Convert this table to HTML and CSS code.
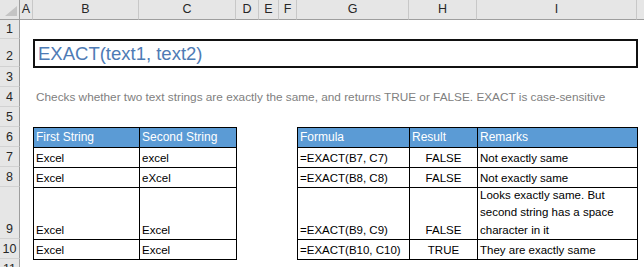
FILE: index.html
```html
<!DOCTYPE html>
<html>
    <head>
        <title>EXACT function</title>
        <link rel="stylesheet" href="styles.css">
    </head>
    <body>
        <div class="sheet">
            <div class="corner"><span class="corner-mark"></span></div>
            <div class="col-head">A</div>
            <div class="col-head">B</div>
            <div class="col-head">C</div>
            <div class="col-head">D</div>
            <div class="col-head">E</div>
            <div class="col-head">F</div>
            <div class="col-head">G</div>
            <div class="col-head">H</div>
            <div class="col-head">I</div>
            <div class="col-head last"></div>

            <div class="row-head r1">1</div>
            <div class="row-head r2">2</div>
            <div class="row-head r3">3</div>
            <div class="row-head r4">4</div>
            <div class="row-head r5">5</div>
            <div class="row-head r6">6</div>
            <div class="row-head r7">7</div>
            <div class="row-head r8">8</div>
            <div class="row-head r9">9</div>
            <div class="row-head r10">10</div>
            <div class="row-head r11">11</div>

            <div class="title">EXACT(text1, text2)</div>
            <div class="desc">Checks whether two text strings are exactly the same, and returns TRUE or FALSE. EXACT is case-sensitive</div>

            <div class="tbl strings">
                <div class="th">First String</div>
                <div class="th">Second String</div>
                <div class="td">Excel</div>
                <div class="td">excel</div>
                <div class="td">Excel</div>
                <div class="td">eXcel</div>
                <div class="td">Excel</div>
                <div class="td">Excel </div>
                <div class="td">Excel</div>
                <div class="td">Excel</div>
            </div>

            <div class="tbl results">
                <div class="th">Formula</div>
                <div class="th">Result</div>
                <div class="th">Remarks</div>
                <div class="td">=EXACT(B7, C7)</div>
                <div class="td mid">FALSE</div>
                <div class="td">Not exactly same</div>
                <div class="td">=EXACT(B8, C8)</div>
                <div class="td mid">FALSE</div>
                <div class="td">Not exactly same</div>
                <div class="td">=EXACT(B9, C9)</div>
                <div class="td mid">FALSE</div>
                <div class="td wrap">Looks exactly same. But<br>second string has a space<br>character in it</div>
                <div class="td">=EXACT(B10, C10)</div>
                <div class="td mid">TRUE</div>
                <div class="td">They are exactly same</div>
            </div>
        </div>
    </body>
</html>
```

FILE: styles.css
```css
body {
    margin: 0;
    background-color: white;
    font-family: 'Liberation Sans', Arial, sans-serif;
    color: black;
    overflow: hidden;
}

/* worksheet grid: row header, columns A..I, then the clipped J */
.sheet {
    display: grid;
    grid-template-columns: 20px 13px 106px 97px 23px 20px 18px 112px 68px 160px 1fr;
    grid-template-rows: 20px 19px 28px 20px 20px 20px 20px 20px 20px 52px 20px 20px;
    width: 644px;
    height: 267px;
    overflow: hidden;
}

.corner {
    grid-row: 1;
    grid-column: 1;
    position: relative;
    background-color: #e6e6e6;
    border-right: 1px solid #9e9e9e;
    border-bottom: 1px solid #9e9e9e;
}

.corner-mark {
    position: absolute;
    right: 2px;
    bottom: 3px;
    width: 0;
    height: 0;
    border-left: 12px solid transparent;
    border-bottom: 10px solid #c4c4c4;
}

.col-head {
    grid-row: 1;
    background-color: #e6e6e6;
    border-right: 1px solid #c8c8c8;
    border-bottom: 1px solid #9e9e9e;
    box-sizing: border-box;
    font-size: 12.5px;
    color: #262626;
    text-align: center;
    line-height: 19px;
}

.col-head.last {
    border-right: none;
}

.row-head {
    grid-column: 1;
    background-color: #e6e6e6;
    border-right: 1px solid #9e9e9e;
    border-bottom: 1px solid #d2d2d2;
    box-sizing: border-box;
    font-size: 12.5px;
    color: #262626;
    display: flex;
    align-items: flex-end;
    justify-content: center;
    padding-bottom: 2px;
}

.r1 { grid-row: 2; }
.r2 { grid-row: 3; padding-bottom: 3px; }
.r3 { grid-row: 4; }
.r4 { grid-row: 5; }
.r5 { grid-row: 6; }
.r6 { grid-row: 7; }
.r7 { grid-row: 8; }
.r8 { grid-row: 9; }
.r9 { grid-row: 10; }
.r10 { grid-row: 11; }
.r11 { grid-row: 12; }

.title {
    grid-column: 3 / 11;
    grid-row: 3;
    height: 29px;
    width: 605px;
    box-sizing: border-box;
    border: 2px solid #111;
    padding: 0 0 0 3px;
    font-size: 18.5px;
    line-height: 25px;
    color: #4e7bb5;
}

.desc {
    grid-column: 3 / 12;
    grid-row: 5;
    white-space: nowrap;
    font-size: 11.8px;
    color: #808080;
    padding: 3px 0 0 3px;
}

/* bordered tables drawn with a black backing showing through 1px gaps */
.tbl {
    grid-row: 7 / 12;
    display: grid;
    grid-template-rows: 19px 19px 19px 51px 19px;
    gap: 1px;
    padding: 1px;
    background-color: black;
    font-size: 11.5px;
    align-self: start;
    justify-self: start;
}

.strings {
    grid-column: 3 / 5;
    grid-template-columns: 105px 96px;
}

.results {
    grid-column: 8 / 11;
    grid-template-columns: 111px 67px 159px;
}

.th,
.td {
    background-color: white;
    display: flex;
    align-items: flex-end;
    padding: 0 0 3px 2px;
    white-space: nowrap;
    overflow: hidden;
}

.th {
    background-color: #5b9bd5;
    color: white;
    font-size: 12px;
    padding-bottom: 3px;
}

.td.mid {
    justify-content: center;
    padding-left: 0;
}

.td.wrap {
    line-height: 17.5px;
    padding-bottom: 0;
}
```
